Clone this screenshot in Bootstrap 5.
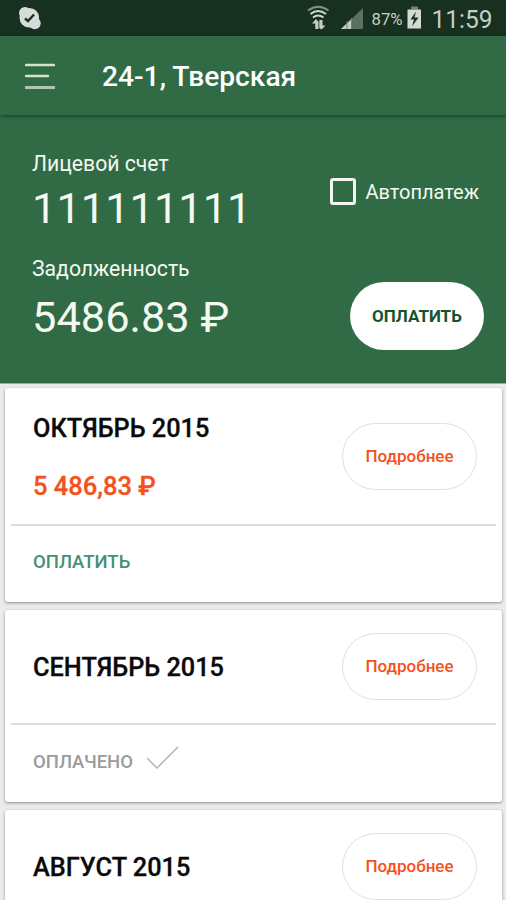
<!DOCTYPE html>
<html lang="ru">
<head>
<meta charset="utf-8">
<meta name="viewport" content="width=device-width, initial-scale=1">
<title>24-1, Тверская</title>
<link href="https://cdn.jsdelivr.net/npm/bootstrap@5.3.0/dist/css/bootstrap.min.css" rel="stylesheet">
<style>
body{font-family:Roboto,"Noto Sans",sans-serif;background:#ebebeb;height:900px;overflow:hidden;line-height:1}
.status{height:36px;background:#17301f;color:#c3cbc5}
.messenger{margin-left:18px}
.toolbar{height:79px;background:#306b45;padding:3px 25px 0;box-shadow:0 1px 4px rgba(0,0,0,.45);z-index:1}
.title{font-size:28.2px;font-weight:500;margin-left:47px}
.summary{height:269px;background:#306b45;color:#f3f8f0;padding:37px 22px 0 32px;border-bottom:1px solid #92ae9b}
.label{font-size:21.2px;line-height:24px}
.figure{font-size:43.4px;line-height:46px}
.account{margin-top:10px}.mt-debt{margin-top:25px}.debt{margin-top:14px}
.side{padding-top:26px}.side label{margin-right:5px;gap:9px}.side .pill{margin-top:77px}
.box{width:26px;height:27px;border:3px solid #f1f6ef;border-radius:3px}
.auto{font-size:20px;padding-top:1px}
.pill{height:68px;width:135px;font-size:17px;font-weight:500;border-radius:34px;line-height:1;padding:0}
.pill-pay,.pill-pay:hover{width:134px;background:#fff;color:#14552a;font-weight:700}
.pill-more,.pill-more:hover{height:67px;border:1px solid #dfdfdf;background:#fff;color:#f4511e}
.bills{padding-top:4px;height:516px;overflow:hidden}
.bill{border:0;border-radius:3px;box-shadow:0 1px 3px rgba(0,0,0,.4);margin:0 4px 8px 5px}
.bill-top{padding:0 25px 0 28px}
.bill-foot{height:78px;margin:0 6px;padding:0 22px 3px;border-top:2px solid #dcdcdc;font-size:18.5px;font-weight:500}
.bill-foot.paid{height:79px}
.tall{height:136px}.short{height:113px}
.month,.sum{font-size:25.3px;font-weight:500;color:#0a0a0a;line-height:28px;padding-top:2px}
.month{-webkit-text-stroke:.3px #0a0a0a}
.sum{color:#f4511e;margin-top:27px;font-size:25.5px;-webkit-text-stroke:.3px #f4511e}
.short .month{padding-top:3px}
.pay{color:#459073}.paid{color:#9b9b9b}
.tick{margin:0 0 8px 14px}
</style>
<script src="https://cdn.jsdelivr.net/npm/bootstrap@5.3.0/dist/js/bootstrap.bundle.min.js"></script>
</head>
<body>
<header class="status d-flex align-items-center justify-content-between">
  <svg class="messenger" width="24" height="24" viewBox="0 0 24 24"><circle cx="11.300" cy="11.800" r="9.800" fill="#d6dcd8"/><circle cx="7" cy="7" r="6" fill="#d6dcd8"/><circle cx="16.700" cy="17.200" r="6" fill="#d6dcd8"/><path d="M7 12.500l3 2.500 6-6.500" fill="none" stroke="#17301f" stroke-width="2.400"/></svg>
  <svg width="199" height="36" viewBox="307 0 199 36" font-family="Roboto, sans-serif" fill="#c6cec8">
    <g fill="none" stroke-width="2"><path d="M308 10.500q10-7.500 20.500 0" stroke="#7f9186"/><path d="M310.500 14q7.500-6 15.500 0M313 17.500q5-4 10.500 0" stroke="#d0d7d2"/></g>
    <path d="M312 23.500l4-4.500 2.500 3V29h-3.200v-5.500zM319.300 28l0-8h3.200v5.500h3l-4 4z"/>
    <path d="M341 29l22-21v21z" fill="#5b7063"/><path d="M341 29l11-10.500V29z"/><path d="M347 21v8M351.500 18v11" stroke="#6d8075"/>
    <text x="371.500" y="25" font-size="17" textLength="31" lengthAdjust="spacingAndGlyphs">87%</text>
    <path d="M411 6.500h7v3h-7z" fill="#6e8376"/><path d="M407.500 9.500h13.500V28.500h-13.500z" fill="#d3dad5"/><path d="M416 11.500l-5.500 8h3.500l-2 7 6.500-9h-4z" fill="#17301f"/>
    <text x="431.500" y="28" font-size="26.500" textLength="61" lengthAdjust="spacingAndGlyphs">11:59</text>
  </svg>
</header>
<nav class="toolbar position-relative d-flex align-items-center">
  <svg width="30" height="28" viewBox="0 0 30 28" fill="none" stroke="#c9d9c8" stroke-width="2.4" stroke-linecap="round"><path d="M1 2h28M1 13h22" stroke="#d3e4cb"/><path d="M1 24.500h28" stroke="#b0c7b6" stroke-width="3"/></svg>
  <div class="title text-white text-nowrap">24-1, Тверская</div>
</nav>
<section class="summary d-flex justify-content-between">
  <div class="text-nowrap">
    <div class="label">Лицевой счет</div>
    <div class="figure account">111111111</div>
    <div class="label mt-debt">Задолженность</div>
    <div class="figure debt">5486.83 ₽</div>
  </div>
  <div class="side d-flex flex-column align-items-end">
    <label class="d-flex align-items-center"><span class="box"></span><span class="auto">Автоплатеж</span></label>
    <button class="btn pill pill-pay">ОПЛАТИТЬ</button>
  </div>
</section>
<main class="bills">
  <article class="card bill">
    <div class="bill-top tall d-flex align-items-center justify-content-between">
      <div><div class="month">ОКТЯБРЬ 2015</div><div class="sum">5 486,83 ₽</div></div>
      <button class="btn pill pill-more">Подробнее</button>
    </div>
    <div class="bill-foot pay d-flex align-items-center"><span>ОПЛАТИТЬ</span></div>
  </article>
  <article class="card bill">
    <div class="bill-top short d-flex align-items-center justify-content-between">
      <div class="month">СЕНТЯБРЬ 2015</div>
      <button class="btn pill pill-more">Подробнее</button>
    </div>
    <div class="bill-foot paid d-flex align-items-center"><span>ОПЛАЧЕНО</span>
      <svg class="tick" width="32" height="24" viewBox="0 0 32 24" fill="none" stroke="#b3b3b3" stroke-width="1.500"><path d="M0 12l10 10L31 1"/></svg></div>
  </article>
  <article class="card bill">
    <div class="bill-top short d-flex align-items-center justify-content-between">
      <div class="month">АВГУСТ 2015</div>
      <button class="btn pill pill-more">Подробнее</button>
    </div>
  </article>
</main>
</body>
</html>
